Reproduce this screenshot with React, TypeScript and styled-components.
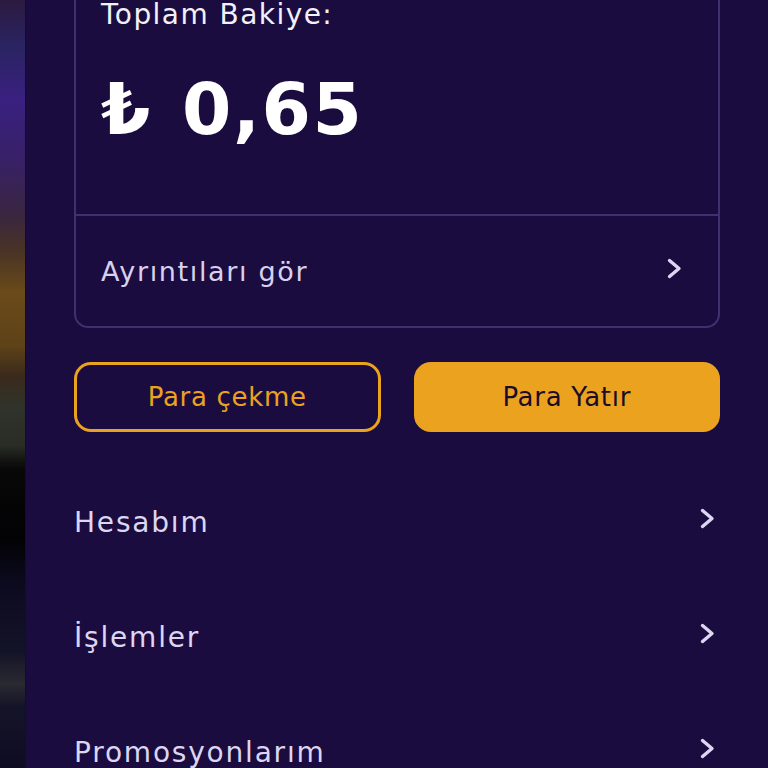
import React from "react";
import styled, { createGlobalStyle } from "styled-components";

const Global = createGlobalStyle`
  html, body { margin: 0; padding: 0; background: #1b0c40; }
  body { font-family: "DejaVu Sans", "Open Sans", sans-serif; overflow: hidden; }
  #root { height: 768px; }
`;

const Screen = styled.div`
  display: flex;
  height: 768px;
  overflow: hidden;
`;

const BlurStrip = styled.div`
  width: 25px;
  flex-shrink: 0;
  border-right: 1px solid #150a30;
  background: linear-gradient(
    180deg,
    #2c1a40 0%,
    #2a2462 6%,
    #3a2080 13%,
    #38206a 20%,
    #3a2640 28%,
    #4a3424 33%,
    #6a4a1a 38%,
    #5e4218 45%,
    #3a2a1c 49%,
    #30332c 53%,
    #2a2c26 58%,
    #080808 61%,
    #020204 70%,
    #0c0a1e 76%,
    #141428 85%,
    #2a2a32 89%,
    #141428 92%,
    #0f0c22 100%
  );
`;

const Panel = styled.div`
  flex: 1;
  background: #1b0c40;
  padding: 0 48px;
  display: flex;
  flex-direction: column;
`;

const Card = styled.div`
  margin-top: -40px;
  border: 2px solid #3f3170;
  border-radius: 14px;
  display: flex;
  flex-direction: column;
`;

const CardTop = styled.div`
  height: 254px;
  padding: 35px 25px 0;
  box-sizing: border-box;
  border-bottom: 2px solid #3f3170;
`;

const Label = styled.div`
  font-size: 28px;
  line-height: 36px;
  color: #f2f0f8;
  letter-spacing: 1.45px;
`;

const Amount = styled.div`
  margin-top: 37px;
  font-size: 71px;
  line-height: 80px;
  font-weight: 700;
  color: #ffffff;
  letter-spacing: 1.5px;
  word-spacing: 4px;
`;

const DetailsRow = styled.div`
  height: 110px;
  display: flex;
  align-items: center;
  justify-content: space-between;
  padding: 0 36px 0 25px;
  color: #d8d1ee;
  font-size: 27px;
  letter-spacing: 1.65px;
`;

const Buttons = styled.div`
  margin-top: 34px;
  display: grid;
  grid-template-columns: 1fr 1fr;
  gap: 33px;
`;

const Button = styled.button<{ $filled?: boolean }>`
  height: 70px;
  border-radius: 17px;
  font-family: inherit;
  font-size: 26px;
  letter-spacing: 0.7px;
  border: 3px solid #eba21f;
  background: ${(p) => (p.$filled ? "#eba21f" : "transparent")};
  color: ${(p) => (p.$filled ? "#1c0c2c" : "#eba21f")};
  cursor: pointer;
`;

const Menu = styled.div`
  margin-top: 33px;
  display: flex;
  flex-direction: column;
`;

const MenuItem = styled.div`
  height: 115px;
  display: flex;
  align-items: center;
  justify-content: space-between;
  padding: 0 5px 0 0;
  color: #ddd6f1;
  font-size: 28px;
  letter-spacing: 1.8px;
`;

const ChevronBox = styled.span<{ $lift: number }>`
  display: flex;
  margin-top: ${(p) => -p.$lift * 2}px;
`;

const Chevron = ({ lift }: { lift: number }) => (
  <ChevronBox $lift={lift}>
    <svg width="15" height="21" viewBox="0 0 15 21" fill="none">
      <polyline
        points="2.5,2.5 12,10.5 2.5,18.5"
        stroke="#ddd6f1"
        strokeWidth="3.4"
        strokeLinecap="round"
        strokeLinejoin="round"
      />
    </svg>
  </ChevronBox>
);

export default function App() {
  return (
    <>
      <Global />
      <Screen>
        <BlurStrip />
        <Panel>
          <Card>
            <CardTop>
              <Label>Toplam Bakiye:</Label>
              <Amount>₺ 0,65</Amount>
            </CardTop>
            <DetailsRow>
              <span>Ayrıntıları gör</span>
              <Chevron lift={3} />
            </DetailsRow>
          </Card>
          <Buttons>
            <Button>Para çekme</Button>
            <Button $filled>Para Yatır</Button>
          </Buttons>
          <Menu>
            {["Hesabım", "İşlemler", "Promosyonlarım"].map((t) => (
              <MenuItem key={t}>
                <span>{t}</span>
                <Chevron lift={4.5} />
              </MenuItem>
            ))}
          </Menu>
        </Panel>
      </Screen>
    </>
  );
}
